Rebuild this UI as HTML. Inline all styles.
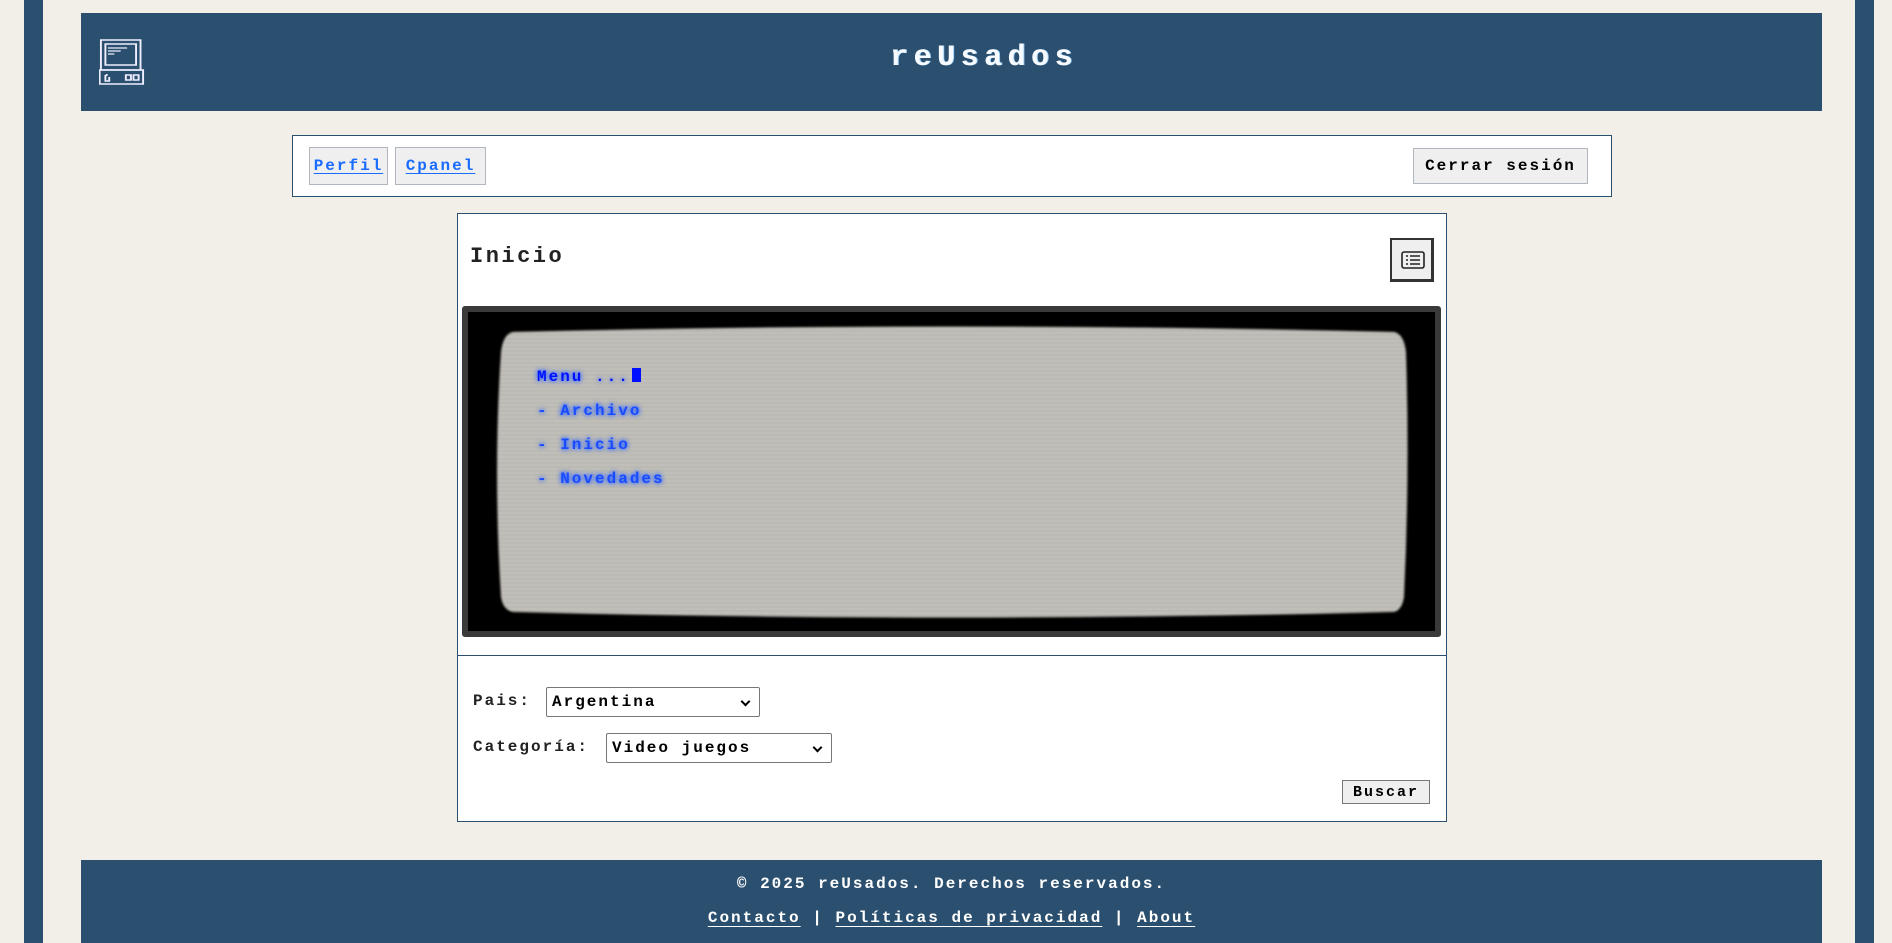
<!DOCTYPE html>
<html><head><meta charset="utf-8"><style>
*{box-sizing:border-box;margin:0;padding:0}
body{width:1892px;height:943px;background:#f2efe8;font-family:"Liberation Mono",monospace;font-weight:bold;position:relative;overflow:hidden}
.abs{position:absolute}
.stripe{top:0;width:19px;height:943px;background:#2b4f6e}
header{left:81px;top:13px;width:1741px;height:98px;background:#2b4f6e}
.title{left:809px;top:28px;color:#f7fbff;font-size:30px;letter-spacing:5.5px;text-shadow:1px 0 #9fd3ff}
.nav{left:292px;top:135px;width:1320px;height:62px;background:#fff;border:1px solid #2b4f6e}
.btn{background:#efefef;border:1px solid #b0b6be;font-size:16px;letter-spacing:2px;display:flex;align-items:center;justify-content:center}
.btn a{color:#1a6cff;text-decoration:underline;text-underline-offset:3px}
.card{left:457px;top:213px;width:990px;height:609px;background:#fff;border:1px solid #2b4f6e}
.lbl{font-size:16px;letter-spacing:2px;color:#222}
.sel{background:#fff;border:1px solid #777;border-radius:2px;font-size:16px;letter-spacing:2px;color:#000;padding-left:5px;display:flex;align-items:center}
.sel:after{content:"";position:absolute;right:10px;top:10px;width:5px;height:5px;border-right:2px solid #000;border-bottom:2px solid #000;transform:rotate(45deg)}
footer{left:81px;top:860px;width:1741px;height:83px;background:#2b4f6e;color:#fff;font-size:16px;letter-spacing:2px;text-align:center}
footer a{color:#fff;text-decoration:underline;text-underline-offset:4px}
.crt{left:462px;top:306px;width:979px;height:331px;background:#000;border:6px solid #3a3a3a;border-radius:3px}
.m{font-size:16px;letter-spacing:2px;color:#1a4cff;text-shadow:0 0 4px #3a6cff,0 0 6px #3a6cff}
</style></head><body>
<div class="abs stripe" style="left:24px"></div>
<div class="abs stripe" style="left:1855px"></div>
<header class="abs">
<svg class="abs" style="left:18px;top:26px" width="46" height="46" viewBox="0 0 36 46" fill="none" stroke="#eef" stroke-width="1.5" preserveAspectRatio="none">
<rect x="1.5" y="1" width="31" height="30"/><rect x="5" y="5" width="24" height="21"/>
<path d="M7 9h15M7 12h10M7 15h5" stroke-width="1.2"/>
<rect x="0.5" y="31" width="34" height="14"/>
<path d="M5 36v6h3v-4M6 35v2"/><rect x="21" y="36" width="4" height="5"/><rect x="27" y="36" width="4" height="5"/>
</svg>
<div class="abs title">reUsados</div>
</header>
<div class="abs nav">
<div class="abs btn" style="left:16px;top:11px;width:79px;height:38px"><a>Perfil</a></div>
<div class="abs btn" style="left:102px;top:11px;width:91px;height:38px"><a>Cpanel</a></div>
<div class="abs btn" style="left:1120px;top:12px;width:175px;height:36px;color:#000">Cerrar sesión</div>
</div>
<div class="abs card">
<div class="abs" style="left:12px;top:30px;font-size:22px;letter-spacing:2.5px;color:#222">Inicio</div>
<div class="abs" style="left:932px;top:24px;width:44px;height:44px;background:#efefef;border:2px solid #333;border-right-width:3px;border-bottom-width:3px">
<svg class="abs" style="left:9px;top:11px" width="24" height="18" viewBox="0 0 24 18" fill="none" stroke="#222" stroke-width="1.6"><rect x="1" y="1" width="22" height="16" rx="2"/><path d="M5 5h2M5 9h2M5 13h2M9 5h10M9 9h10M9 13h10"/></svg>
</div>
</div>
<div class="abs crt">
<svg class="abs" style="left:0;top:0" width="967" height="319">
<defs><pattern id="sl" width="4" height="4" patternUnits="userSpaceOnUse"><rect width="4" height="2" fill="#c9c7c0"/><rect y="2" width="4" height="2" fill="#b2b0aa"/></pattern>
<filter id="b"><feGaussianBlur stdDeviation="1"/></filter></defs>
<path d="M45 20 Q482 9 926 20 Q936 22 938 40 Q942 160 936 285 Q934 298 926 300 Q482 311 45 300 Q35 298 33 285 Q25 160 33 40 Q35 22 45 20 Z" fill="url(#sl)" filter="url(#b)"/>
</svg>
<div class="abs m" style="left:69px;top:56px;color:#0010ff">Menu ...<span style="display:inline-block;width:9px;height:14px;background:#0010ff;vertical-align:-1px;margin-left:2px"></span></div>
<div class="abs m" style="left:69px;top:90px">- Archivo</div>
<div class="abs m" style="left:69px;top:124px">- Inicio</div>
<div class="abs m" style="left:69px;top:158px">- Novedades</div>
</div>
<div class="abs" style="left:457px;top:655px;width:990px;height:1px;background:#2b4f6e"></div>
<div class="abs lbl" style="left:473px;top:692px">Pais:</div>
<div class="abs sel" style="left:546px;top:687px;width:214px;height:30px">Argentina</div>
<div class="abs lbl" style="left:473px;top:738px">Categoría:</div>
<div class="abs sel" style="left:606px;top:733px;width:226px;height:30px">Video juegos</div>
<div class="abs btn" style="left:1342px;top:780px;width:88px;height:24px;font-size:15px;border-color:#777;color:#000">Buscar</div>
<footer class="abs">
<div style="position:absolute;top:15px;width:100%">© 2025 reUsados. Derechos reservados.</div>
<div style="position:absolute;top:49px;width:100%"><a>Contacto</a> | <a>Políticas de privacidad</a> | <a>About</a></div>
</footer>
</body></html>
